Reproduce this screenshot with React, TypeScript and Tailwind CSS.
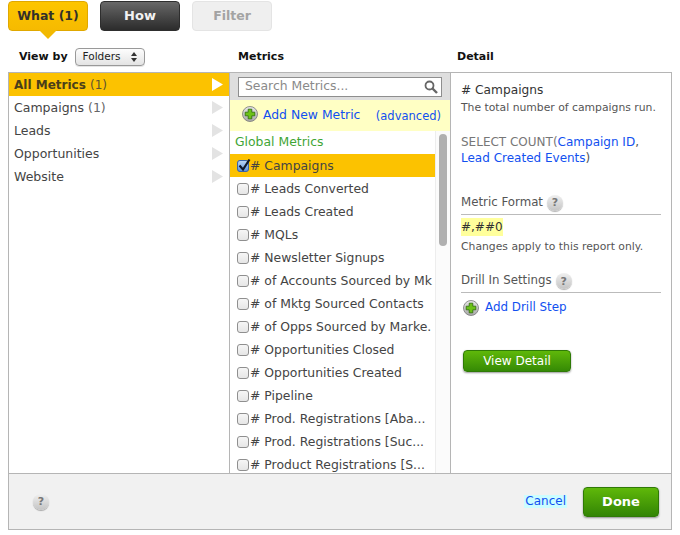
const font = { fontFamily: '"DejaVu Sans", sans-serif' };

const folders: [string, string, boolean][] = [
  ["All Metrics", "(1)", true],
  ["Campaigns", "(1)", false],
  ["Leads", "", false],
  ["Opportunities", "", false],
  ["Website", "", false],
];

const metrics = [
  "# Leads Converted",
  "# Leads Created",
  "# MQLs",
  "# Newsletter Signups",
  "# of Accounts Sourced by Mk",
  "# of Mktg Sourced Contacts",
  "# of Opps Sourced by Marke.",
  "# Opportunities Closed",
  "# Opportunities Created",
  "# Pipeline",
  "# Prod. Registrations [Aba...",
  "# Prod. Registrations [Suc...",
  "# Product Registrations [S...",
];

function Plus({ size = 16 }: { size?: number }) {
  return (
    <svg width={size} height={size} viewBox="0 0 16 16" className="shrink-0">
      <defs>
        <linearGradient id="plusRing" x1="0" y1="0" x2="0" y2="1">
          <stop offset="0" stopColor="#e8e8e8" />
          <stop offset="1" stopColor="#a8a8a8" />
        </linearGradient>
      </defs>
      <circle cx="8" cy="8" r="7.5" fill="url(#plusRing)" stroke="#777" strokeWidth="0.8" />
      <path d="M6.2 3.2h3.6v3h3v3.6h-3v3H6.2v-3h-3V6.2h3z" fill="#6cc217" stroke="#2c6a08" strokeWidth="0.8" />
    </svg>
  );
}

function Help({ className = "" }: { className?: string }) {
  return (
    <span
      className={`inline-flex h-4 w-4 shrink-0 items-center justify-center rounded-full bg-gradient-to-b from-[#f0f0f0] to-[#c4c4c4] text-[11px] font-bold leading-none text-[#777] shadow-[0_1px_1px_rgba(0,0,0,0.3)] ${className}`}
    >
      ?
    </span>
  );
}

function Checkbox({ checked = false }: { checked?: boolean }) {
  return (
    <span className="relative mr-px inline-block h-[12px] w-[12px] shrink-0 rounded-[3px] border border-[#8f8f8f] bg-gradient-to-b from-[#f6f6f6] to-[#e6e6e6]">
      {checked && (
        <>
          <span className="absolute inset-[-1px] rounded-[3px] border border-[#3b63a8] bg-gradient-to-b from-[#b9d3f3] to-[#5c93dc]" />
          <svg width="14" height="14" viewBox="0 0 14 14" className="absolute left-[-1px] top-[-3px]">
            <path d="M2.5 7.5L6 11.5L12.5 1.5" fill="none" stroke="#10172a" strokeWidth="2.2" />
          </svg>
        </>
      )}
    </span>
  );
}

function Triangle({ color }: { color: string }) {
  return (
    <svg width="11" height="13" viewBox="0 0 11 13">
      <path d="M0 0L11 6.5L0 13z" fill={color} />
    </svg>
  );
}

export default function App() {
  return (
    <div className="h-[535px] w-[680px] overflow-hidden bg-white text-[#333]" style={font}>
      <div className="flex h-[39px] items-start gap-3 pl-2 pt-px text-[13px] font-bold">
        <div className="relative flex h-[30px] w-20 items-center justify-center rounded-[4px] border border-[#e0a800] bg-gradient-to-b from-[#fdc500] to-[#f6ba00] text-[12.5px] text-[#33302a]">
          What (1)
          <span className="absolute left-[30px] top-[28px] h-0 w-0 border-x-[9px] border-t-[9px] border-x-transparent border-t-[#f2b900]" />
        </div>
        <div className="flex h-[30px] w-20 items-center justify-center rounded-[4px] border border-[#2e2e2e] bg-gradient-to-b from-[#686868] to-[#2c2c2c] text-[#f2f2f2]">
          How
        </div>
        <div className="flex h-[30px] w-20 items-center justify-center rounded-[4px] border border-[#e4e4e4] bg-[#efefef] text-[12.5px] text-[#a3a3a3]">
          Filter
        </div>
      </div>

      <div className="flex h-[33px] items-center pt-[3px] text-[11px] font-bold text-[#111]">
        <div className="flex w-[238px] items-center pl-[19px]">
          View by
          <span className="ml-[7px] flex h-[18px] w-[70px] items-center justify-between rounded-[4px] border border-[#999] bg-gradient-to-b from-[#fdfdfd] to-[#e4e4e4] pl-[7px] pr-[7px] text-[10.5px] font-normal text-[#222] shadow-[0_1px_0_rgba(0,0,0,0.1)]">
            Folders
            <svg width="6" height="10" viewBox="0 0 6 10">
              <path d="M3 0L6 4H0zM3 10L0 6H6z" fill="#333" />
            </svg>
          </span>
        </div>
        <div className="w-[219px]">Metrics</div>
        <div>Detail</div>
      </div>

      <div className="ml-2 flex h-[458px] w-[664px] flex-col border border-[#b5b5b5]">
        <div className="flex h-[400px] min-h-0">
          <div className="w-[221px] shrink-0 border-r border-[#b5b5b5] text-[12.5px]">
            {folders.map(([name, count, active]) => (
              <div
                key={name}
                className={`flex h-[23px] items-center justify-between pl-[5px] pr-[6px] ${active ? "bg-[#fcc200] text-[#4a3f1a]" : "text-[#444]"}`}
              >
                <span className={`pt-px ${active ? "text-[12px] font-bold" : ""}`}>
                  {name}{" "}
                  {count && <span className={`font-normal ${active ? "text-[#5d5230]" : "text-[#666]"}`}>{count}</span>}
                </span>
                <Triangle color={active ? "#ffffff" : "#e3e3e3"} />
              </div>
            ))}
          </div>

          <div className="flex w-[221px] shrink-0 flex-col overflow-hidden border-r border-[#b5b5b5] text-[12.4px] text-[#444]">
            <div className="flex h-[27px] shrink-0 items-center bg-[#dedede] px-2">
              <div className="flex h-[20px] w-[206px] items-center justify-between border border-[#8e8e8e] bg-white pl-[6px] pr-[3px] text-[#8a8a8a]">
                Search Metrics...
                <svg width="14" height="14" viewBox="0 0 14 14">
                  <circle cx="5.5" cy="5.5" r="4" fill="none" stroke="#666" strokeWidth="1.8" />
                  <path d="M8.5 8.5L13 13" stroke="#666" strokeWidth="2.4" />
                </svg>
              </div>
            </div>
            <div className="flex h-[31px] shrink-0 items-start bg-[#ffffc4] pl-[12px] pr-[9px] pt-[6px] text-[#1150f0]">
              <Plus />
              <span className="ml-[5px]">Add New Metric</span>
              <span className="ml-auto mt-[2px] text-[11.5px]">(advanced)</span>
            </div>
            <div className="flex min-h-0 flex-1">
              <div className="w-[205px] shrink-0 overflow-hidden whitespace-nowrap">
                <div className="flex h-[23px] items-center pl-[5px] text-[#3fa535]">Global Metrics</div>
                <div className="flex h-[23px] items-center bg-[#fcc200] pl-[7px]">
                  <Checkbox checked />
                  <span className="pt-px"># Campaigns</span>
                </div>
                {metrics.map((m) => (
                  <div key={m} className="flex h-[23px] items-center pl-[7px]">
                    <Checkbox />
                    <span className="pt-px">{m}</span>
                  </div>
                ))}
              </div>
              <div className="flex-1 border-l border-[#ededed] bg-[#fbfbfb] pl-[3px] pt-[3px]">
                <div className="h-[112px] w-2 rounded-full bg-[#b0b0b0]" />
              </div>
            </div>
          </div>

          <div className="min-w-0 flex-1 pl-[10px] pr-[10px] text-[10.8px] text-[#555]">
            <div className="mt-[9px] text-[12.2px] leading-4 text-[#333]"># Campaigns</div>
            <div className="mt-[2px] leading-4">The total number of campaigns run.</div>
            <div className="mt-[18px] text-[12px] leading-[16px]">
              <span className="text-[#777]">SELECT COUNT(</span>
              <span className="text-[#1150f0]">Campaign ID</span>,<br />
              <span className="text-[#1150f0]">Lead Created Events</span>)
            </div>
            <div className="mt-[25px] flex h-[24px] items-center gap-[4px] border-b border-[#bbb] text-[11.8px]">
              Metric Format <Help />
            </div>
            <div className="mt-[4px] flex h-[16px] items-center text-[12px] text-[#333]">
              <span className="bg-[#ffff9c]">#,##0</span>
            </div>
            <div className="mt-[4px] leading-4">Changes apply to this report only.</div>
            <div className="mt-[15px] flex h-[23px] items-center gap-[4px] border-b border-[#bbb] text-[11.8px]">
              Drill In Settings <Help />
            </div>
            <div className="mt-[6px] flex items-center gap-[6px] pl-[2px] text-[11.9px] text-[#1150f0]">
              <Plus />
              Add Drill Step
            </div>
            <div className="ml-[2px] mt-[33px] flex h-[22px] w-[108px] items-center justify-center rounded-[4px] border border-[#2f7a06] bg-gradient-to-b from-[#5fb80a] to-[#358a05] text-[12px] text-white shadow-[0_1px_2px_rgba(0,0,0,0.4)]">
              View Detail
            </div>
          </div>
        </div>

        <div className="flex flex-1 items-center border-t border-[#b5b5b5] bg-[#f1f1f1] pl-[24px] pr-[12px]">
          <Help />
          <span className="ml-auto bg-[#ccfeff] px-px text-[12px] leading-[13px] text-[#1150f0]">Cancel</span>
          <div className="ml-[16px] flex h-[30px] w-[76px] items-center justify-center rounded-[4px] border border-[#2f7a06] bg-gradient-to-b from-[#5fb80a] to-[#338505] text-[13px] font-bold text-white shadow-[0_1px_2px_rgba(0,0,0,0.4)]">
            Done
          </div>
        </div>
      </div>
    </div>
  );
}
